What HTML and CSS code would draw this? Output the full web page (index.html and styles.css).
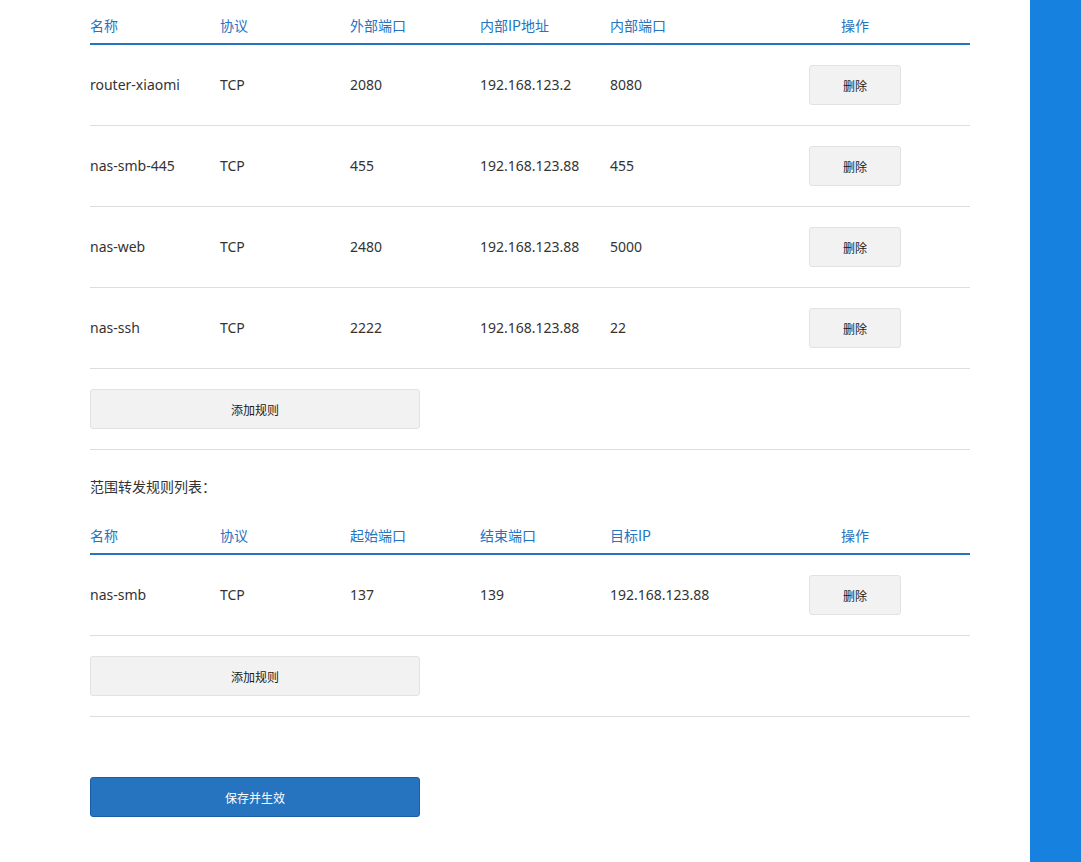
FILE: index.html
```html
<!DOCTYPE html>
<html lang="zh-CN">
<head>
<meta charset="utf-8">
<title>端口转发</title>
<link rel="stylesheet" href="styles.css">
</head>
<body>
<div class="layout">
  <main class="main">
    <table class="rules">
      <colgroup>
        <col class="c"><col class="c"><col class="c"><col class="c"><col class="c"><col class="c-op">
      </colgroup>
      <thead>
        <tr><th>名称</th><th>协议</th><th>外部端口</th><th>内部IP地址</th><th>内部端口</th><th class="op">操作</th></tr>
      </thead>
      <tbody>
        <tr><td>router-xiaomi</td><td>TCP</td><td>2080</td><td>192.168.123.2</td><td>8080</td><td class="op"><button class="btn btn-del">删除</button></td></tr>
        <tr><td>nas-smb-445</td><td>TCP</td><td>455</td><td>192.168.123.88</td><td>455</td><td class="op"><button class="btn btn-del">删除</button></td></tr>
        <tr><td>nas-web</td><td>TCP</td><td>2480</td><td>192.168.123.88</td><td>5000</td><td class="op"><button class="btn btn-del">删除</button></td></tr>
        <tr><td>nas-ssh</td><td>TCP</td><td>2222</td><td>192.168.123.88</td><td>22</td><td class="op"><button class="btn btn-del">删除</button></td></tr>
      </tbody>
    </table>
    <div class="add-row"><button class="btn btn-add">添加规则</button></div>

    <div class="section-title">范围转发规则列表：</div>

    <table class="rules">
      <colgroup>
        <col class="c"><col class="c"><col class="c"><col class="c"><col class="c"><col class="c-op">
      </colgroup>
      <thead>
        <tr><th>名称</th><th>协议</th><th>起始端口</th><th>结束端口</th><th>目标IP</th><th class="op">操作</th></tr>
      </thead>
      <tbody>
        <tr><td>nas-smb</td><td>TCP</td><td>137</td><td>139</td><td>192.168.123.88</td><td class="op"><button class="btn btn-del">删除</button></td></tr>
      </tbody>
    </table>
    <div class="add-row"><button class="btn btn-add">添加规则</button></div>

    <div class="save-row"><button class="btn btn-save">保存并生效</button></div>
  </main>
  <aside class="sidebar"></aside>
</div>
</body>
</html>
```

FILE: styles.css
```css
html, body {
  margin: 0;
  padding: 0;
  height: 100%;
  background: #ffffff;
}
body {
  font-family: "Noto Sans", "Noto Sans CJK SC", sans-serif;
  font-size: 14px;
  color: #333333;
}
.layout {
  display: flex;
  min-height: 100%;
}
.main {
  width: 880px;
  padding: 0 60px 45px 90px;
  flex: none;
}
.sidebar {
  flex: 1;
  background: #1781df;
}
.rules {
  width: 880px;
  border-collapse: collapse;
  table-layout: fixed;
}
.rules col.c { width: 130px; }
.rules col.c-op { width: 230px; }
.rules th {
  text-align: left;
  font-family: "Noto Sans CJK SC", "Noto Sans", sans-serif;
  font-weight: normal;
  color: #2673c0;
  font-size: 14px;
  line-height: 20px;
  padding: 15px 0 8px 0;
  border-bottom: 2px solid #2673c0;
}
.rules td {
  height: 80px;
  padding: 0;
  line-height: 20px;
  vertical-align: middle;
  border-bottom: 1px solid #dddddd;
  white-space: nowrap;
}
.rules .op { text-align: center; }
.btn {
  font-family: "Noto Sans CJK SC", "Noto Sans", sans-serif;
  font-size: 12px;
  color: #1a1a1a;
  background: #f2f2f2;
  border: 1px solid #e2e2e2;
  border-radius: 3px;
  padding: 0;
  height: 40px;
  cursor: pointer;
  display: block;
}
.btn-del {
  width: 92px;
  margin: 0 auto;
}
.add-row {
  padding: 20px 0;
  border-bottom: 1px solid #dddddd;
}
.btn-add { width: 330px; }
.section-title {
  line-height: 20px;
  padding: 27px 0 13px 0;
  font-size: 14px;
}
.save-row {
  padding-top: 60px;
}
.btn-save {
  width: 330px;
  background: #2673c0;
  border-color: #1a5ea8;
  color: #ffffff;
}
```
